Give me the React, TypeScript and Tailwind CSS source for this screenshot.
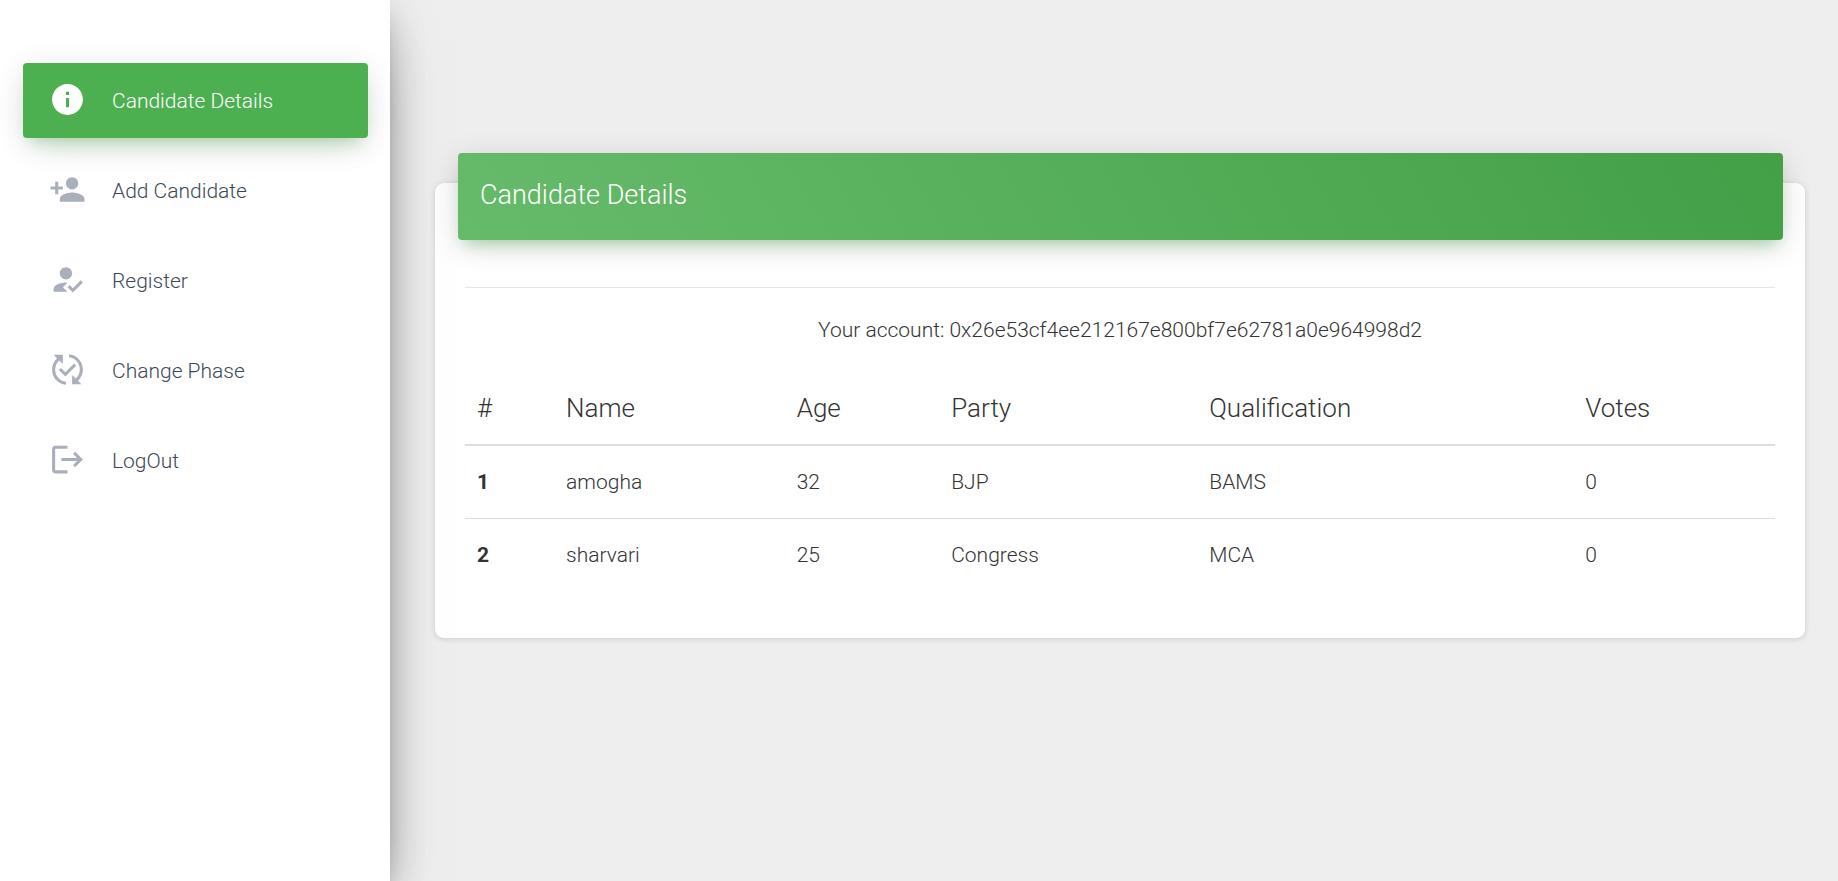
import type { IconType } from 'react-icons';
import { MdHowToReg, MdInfo, MdLogout, MdPersonAdd, MdPublishedWithChanges } from 'react-icons/md';

type NavItem = { label: string; icon: IconType; active?: boolean };

const navItems: NavItem[] = [
  { label: 'Candidate Details', icon: MdInfo, active: true },
  { label: 'Add Candidate', icon: MdPersonAdd },
  { label: 'Register', icon: MdHowToReg },
  { label: 'Change Phase', icon: MdPublishedWithChanges },
  { label: 'LogOut', icon: MdLogout },
];

const columns = [
  { title: '#', width: 'w-[6.8%]' },
  { title: 'Name', width: 'w-[17.6%]' },
  { title: 'Age', width: 'w-[11.8%]' },
  { title: 'Party', width: 'w-[19.7%]' },
  { title: 'Qualification', width: 'w-[28.7%]' },
  { title: 'Votes', width: 'w-[15.4%]' },
];

const candidates = [
  { id: 1, name: 'amogha', age: 32, party: 'BJP', qualification: 'BAMS', votes: 0 },
  { id: 2, name: 'sharvari', age: 25, party: 'Congress', qualification: 'MCA', votes: 0 },
];

function Sidebar() {
  return (
    <aside className="relative z-10 w-[390px] shrink-0 bg-white pt-[63px] pr-[22px] pl-[23px] shadow-[0_24px_57px_-18px_rgba(0,0,0,0.56),0_6px_37px_0_rgba(0,0,0,0.12),0_12px_15px_-7px_rgba(0,0,0,0.2)]">
      <nav>
        <ul className="flex flex-col gap-[15px]">
          {navItems.map(({ label, icon: Icon, active }) => (
            <li key={label}>
              <a
                href="#"
                aria-current={active ? 'page' : undefined}
                className={
                  active
                    ? 'flex h-[75px] items-center gap-[26px] rounded-[4px] bg-[#4caf50] pb-[2px] pl-[26px] text-[21px] leading-[45px] text-white shadow-[0_18px_30px_-15px_rgba(76,175,80,0.28),0_6px_30px_0_rgba(0,0,0,0.12),0_10px_12px_-7px_rgba(76,175,80,0.2)]'
                    : 'flex h-[75px] items-center gap-[26px] rounded-[4px] pb-[2px] pl-[26px] text-[21px] leading-[45px] text-[#3c4858]'
                }
              >
                <Icon aria-hidden className={active ? 'size-[37px]' : 'size-[37px] text-[#a9afbb]'} />
                <span className="pt-1">{label}</span>
              </a>
            </li>
          ))}
        </ul>
      </nav>
    </aside>
  );
}

function CandidateTable() {
  return (
    <table className="mt-[26px] w-full table-fixed border-separate border-spacing-0 text-left">
      <thead>
        <tr>
          {columns.map((column) => (
            <th
              key={column.title}
              scope="col"
              className={`${column.width} border-b-2 border-[#dddddd] px-3 py-[18px] text-[26px] leading-9 font-light`}
            >
              {column.title}
            </th>
          ))}
        </tr>
      </thead>
      <tbody className="[&>tr+tr>*]:border-t [&>tr>*]:border-[#dddddd] [&>tr>*]:px-3 [&>tr>*]:py-5">
        {candidates.map((candidate) => (
          <tr key={candidate.id}>
            <th scope="row" className="font-bold">{candidate.id}</th>
            <td>{candidate.name}</td>
            <td>{candidate.age}</td>
            <td>{candidate.party}</td>
            <td>{candidate.qualification}</td>
            <td>{candidate.votes}</td>
          </tr>
        ))}
      </tbody>
    </table>
  );
}

export default function App() {
  return (
    <div className="flex min-h-screen bg-[#eeeeee] font-[Roboto,sans-serif] text-[21px] leading-8 font-light text-[#333333]">
      <Sidebar />
      <main className="min-w-0 flex-1 pt-[183px] pr-[33px] pl-[45px]">
        <section className="flow-root rounded-[9px] bg-white pr-[22px] pb-[47px] pl-[23px] shadow-[0_1px_6px_0_rgba(0,0,0,0.14)]">
          <header className="-mt-[30px] rounded-[4px] bg-[linear-gradient(60deg,#66bb6a,#43a047)] px-[22px] pt-[23px] pb-[26px] shadow-[0_6px_30px_0_rgba(0,0,0,0.14),0_10px_15px_-7px_rgba(76,175,80,0.4)]">
            <h4 className="text-[27px] leading-[38px] text-white">Candidate Details</h4>
          </header>
          <div className="pt-[47px] pr-2 pl-[7px]">
            <hr className="border-[#e5e5e5]" />
            <p className="mt-[26px] text-center">Your account: 0x26e53cf4ee212167e800bf7e62781a0e964998d2</p>
            <CandidateTable />
          </div>
        </section>
      </main>
    </div>
  );
}
